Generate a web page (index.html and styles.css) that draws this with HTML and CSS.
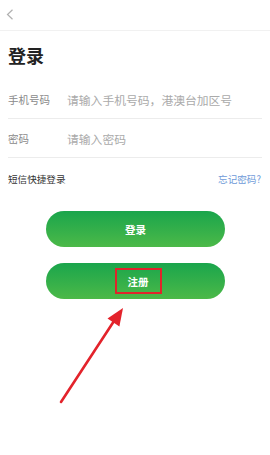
FILE: index.html
```html
<!DOCTYPE html>
<html lang="zh">
<head>
<meta charset="utf-8">
<link rel="stylesheet" href="styles.css">
</head>
<body>
<div class="page">
  <header class="topbar">
    <svg class="back" width="8" height="11" viewBox="0 0 8 11"><path d="M6.5 0.8 L1.5 5.5 L6.5 10.2" fill="none" stroke="#b0b0b0" stroke-width="1.2"/></svg>
  </header>
  <h1 class="title">登录</h1>
  <div class="form">
    <div class="row">
      <span class="label">手机号码</span>
      <span class="placeholder">请输入手机号码，港澳台加区号</span>
    </div>
    <div class="row">
      <span class="label">密码</span>
      <span class="placeholder">请输入密码</span>
    </div>
    <div class="quick">
      <span class="sms">短信快捷登录</span>
      <span class="forgot">忘记密码?</span>
    </div>
  </div>
  <div class="actions">
    <button class="btn">登录</button>
    <button class="btn"><span class="mark">注册</span></button>
  </div>
  <svg class="arrow" width="270" height="455" viewBox="0 0 270 455">
    <line x1="61" y1="402" x2="116" y2="318" stroke="#e3232b" stroke-width="2.6" stroke-linecap="round"/>
    <polygon points="123,308 119.4,326.5 107.5,318.5" fill="#e3232b"/>
  </svg>
</div>
</body>
</html>
```

FILE: styles.css
```css
* { box-sizing: border-box; }
html, body { margin: 0; padding: 0; background: #fff; }
body {
  font-family: "Noto Sans CJK SC", "Noto Sans", sans-serif;
  width: 270px;
  height: 455px;
  overflow: hidden;
}
.page { position: relative; width: 270px; height: 455px; }
.topbar {
  height: 31px;
  border-bottom: 1px solid #f1f1f1;
  display: flex;
  align-items: flex-start;
  padding: 9px 0 0 6px;
}
.back { display: block; }
.title {
  margin: 12px 0 0 8px;
  font-size: 18px;
  line-height: 24px;
  font-weight: 700;
  color: #222;
}
.form { margin-top: 13px; padding: 0 8px; }
.row {
  height: 39px;
  border-bottom: 1px solid #ececec;
  display: flex;
  align-items: center;
}
.label {
  width: 59px;
  font-size: 10.5px;
  color: #8a8a8a;
}
.placeholder {
  font-size: 11.8px;
  color: #aaa;
}
.quick {
  height: 41px;
  display: flex;
  align-items: center;
  justify-content: space-between;
  padding-right: 1px;
}
.sms { font-size: 9.6px; color: #333; }
.forgot { font-size: 9.6px; color: #6e9ad8; }
.actions {
  margin-top: 12px;
  display: flex;
  flex-direction: column;
  align-items: center;
  gap: 16px;
  padding-left: 1px;
}
.btn {
  width: 179px;
  height: 36px;
  border: 0;
  border-radius: 18px;
  background: linear-gradient(#1aa54c, #4cb948);
  color: #fff;
  font-family: inherit;
  font-size: 10.5px;
  font-weight: 700;
  display: flex;
  align-items: center;
  justify-content: center;
  padding: 0;
}
.mark {
  width: 47px;
  height: 26px;
  border: 2.5px solid #e0242b;
  display: flex;
  align-items: center;
  justify-content: center;
  margin-left: 5px;
}
.arrow { position: absolute; left: 0; top: 0; pointer-events: none; }
```
